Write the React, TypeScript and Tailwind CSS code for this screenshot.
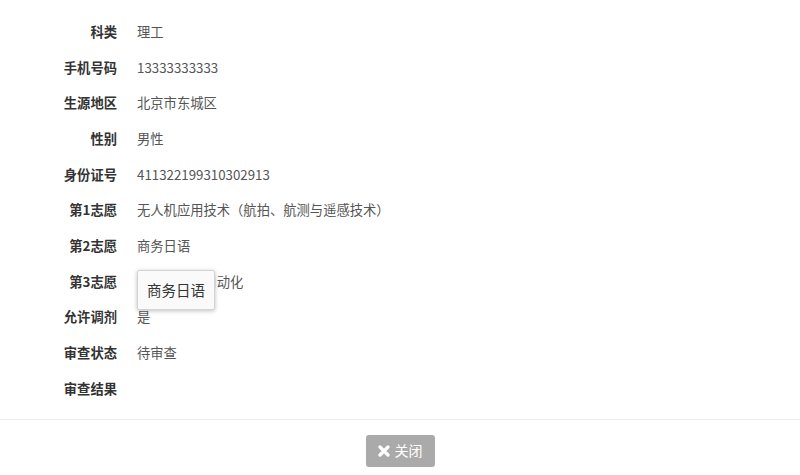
import React from "react";

const rows: [string, string][] = [
  ["科类", "理工"],
  ["手机号码", "13333333333"],
  ["生源地区", "北京市东城区"],
  ["性别", "男性"],
  ["身份证号", "411322199310302913"],
  ["第1志愿", "无人机应用技术（航拍、航测与遥感技术）"],
  ["第2志愿", "商务日语"],
  ["第3志愿", "机械制造与自动化"],
  ["允许调剂", "是"],
  ["审查状态", "待审查"],
  ["审查结果", ""],
];

export default function App() {
  return (
    <div
      className="w-[800px] h-[475px] bg-white overflow-hidden"
      style={{ fontFamily: '"Noto Sans CJK SC", "Liberation Sans", sans-serif' }}
    >
      <div className="pt-[14px]">
        {rows.map(([label, value], i) => (
          <div key={label} className="relative flex items-center h-[35.7px] text-[13.3px]">
            <div className="w-[117px] text-right font-bold text-[#333]">{label}</div>
            <div className="ml-[20px] text-[#555]">{value}</div>
            {i === 7 && (
              <div className="absolute left-[137px] top-[6px] w-[78px] h-[40px] flex items-center justify-center bg-[#fafafa] border border-[#d4d4d4] rounded-[2px] shadow-[0_1px_4px_rgba(0,0,0,0.25)] text-[14.5px] text-[#333]">
                商务日语
              </div>
            )}
          </div>
        ))}
      </div>
      <div className="mt-[12px] border-t border-[#eeeeee]" />
      <div className="flex justify-center pt-[15px]">
        <button className="flex items-center gap-[5px] h-[32px] px-[12px] bg-[#aaaaaa] rounded-[3px] text-white text-[14px]">
          <svg width="12" height="12" viewBox="0 0 12 12">
            <path d="M2 2L10 10M10 2L2 10" stroke="white" strokeWidth="3.2" strokeLinecap="round" />
          </svg>
          关闭
        </button>
      </div>
    </div>
  );
}
